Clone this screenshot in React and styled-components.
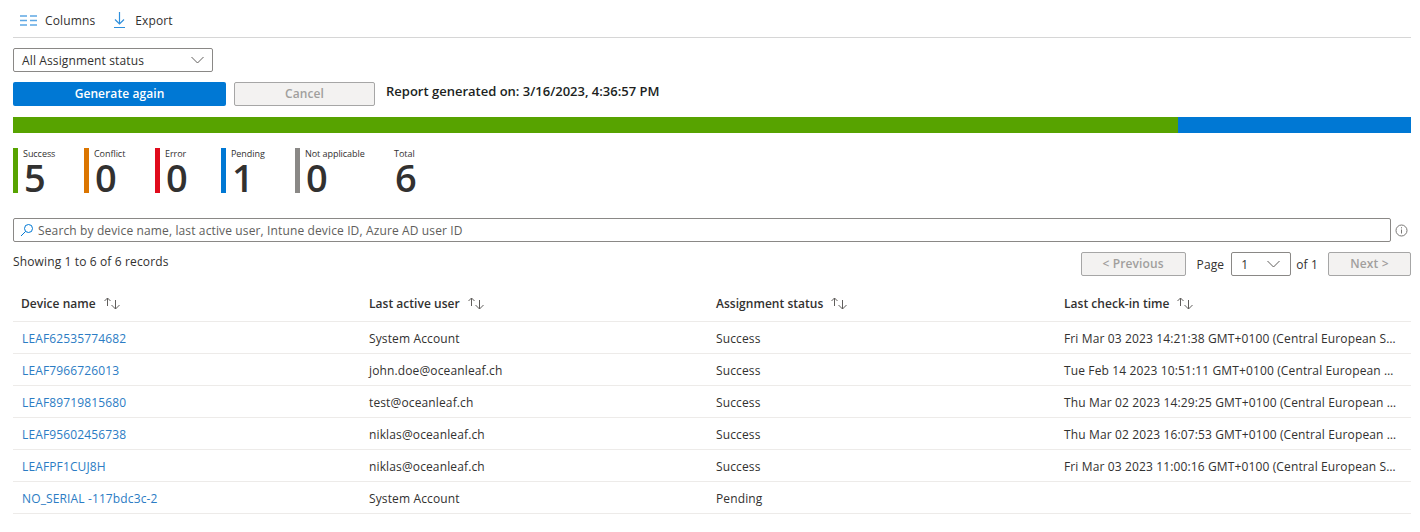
import styled, { createGlobalStyle } from "styled-components";

const GlobalStyle = createGlobalStyle`
    html, body {
        margin: 0;
        background: #fff;
    }
    body {
        font-family: "Open Sans", "Noto Sans", sans-serif;
        font-size: 12px;
        color: #323130;
    }
`;

const stats = [
    { label: "Success", value: 5, color: "#57a300", width: 71 },
    { label: "Conflict", value: 0, color: "#db7500", width: 71 },
    { label: "Error", value: 0, color: "#e00b1c", width: 66 },
    { label: "Pending", value: 1, color: "#0078d4", width: 74 },
    { label: "Not applicable", value: 0, color: "#8a8886", width: 99 },
    { label: "Total", value: 6 },
];

const columns = ["Device name", "Last active user", "Assignment status", "Last check-in time"];

const rows = [
    ["LEAF62535774682", "System Account", "Success", "Fri Mar 03 2023 14:21:38 GMT+0100 (Central European Standard Time)"],
    ["LEAF7966726013", "john.doe@oceanleaf.ch", "Success", "Tue Feb 14 2023 10:51:11 GMT+0100 (Central European Standard Time)"],
    ["LEAF89719815680", "test@oceanleaf.ch", "Success", "Thu Mar 02 2023 14:29:25 GMT+0100 (Central European Standard Time)"],
    ["LEAF95602456738", "niklas@oceanleaf.ch", "Success", "Thu Mar 02 2023 16:07:53 GMT+0100 (Central European Standard Time)"],
    ["LEAFPF1CUJ8H", "niklas@oceanleaf.ch", "Success", "Fri Mar 03 2023 11:00:16 GMT+0100 (Central European Standard Time)"],
    ["NO_SERIAL -117bdc3c-2", "System Account", "Pending", ""],
];

const Chevron = () => (
    <svg width="13" height="8" viewBox="0 0 13 8" fill="none" stroke="#605e5c" strokeWidth="1">
        <path d="M0.500 1l6 6 6-6" />
    </svg>
);

const SortIcon = () => (
    <svg width="18" height="13" viewBox="0 0 18 13" fill="none" stroke="#605e5c" strokeWidth="1">
        <path d="M4.500 9V1M1.500 4l3-3 3 3" />
        <path d="M12.500 3v9M8.500 8l4 4 4-4" />
    </svg>
);

const App = () => {
    return (
        <Page>
            <GlobalStyle />
            <Toolbar>
                <ToolButton>
                    <svg width="17" height="11" viewBox="0 0 17 11" stroke="#5ea8e4" strokeWidth="1.500" fill="none">
                        <path d="M0 1h7M0 5.500h7M0 10h7M10 1h7M10 5.500h7M10 10h7" />
                    </svg>
                    Columns
                </ToolButton>
                <ToolButton>
                    <svg width="15" height="18" viewBox="0 0 15 18" stroke="#2f8fdc" strokeWidth="1.200" fill="none">
                        <path d="M7.500 1v12M3 8.500L7.500 13 12 8.500M2 16.500h11" />
                    </svg>
                    Export
                </ToolButton>
            </Toolbar>

            <StatusSelect>
                All Assignment status
                <Chevron />
            </StatusSelect>

            <ActionRow>
                <PrimaryButton>Generate again</PrimaryButton>
                <CancelButton>Cancel</CancelButton>
                <Generated>Report generated on: 3/16/2023, 4:36:57 PM</Generated>
            </ActionRow>

            <Progress>
                <ProgressPart $grow={5} $color="#57a300" />
                <ProgressPart $grow={1} $color="#0078d4" />
            </Progress>

            <Stats>
                {stats.map((stat) => (
                    <Stat key={stat.label} $color={stat.color} $width={stat.width}>
                        <StatLabel>{stat.label}</StatLabel>
                        <StatValue>{stat.value}</StatValue>
                    </Stat>
                ))}
            </Stats>

            <SearchRow>
                <SearchBox>
                    <svg width="14" height="14" viewBox="0 0 14 14" fill="none" stroke="#0078d4" strokeWidth="1">
                        <circle cx="8.500" cy="5.500" r="4" />
                        <path d="M5.500 8.500L1 13" />
                    </svg>
                    Search by device name, last active user, Intune device ID, Azure AD user ID
                </SearchBox>
                <svg width="13" height="13" viewBox="0 0 13 13" fill="none" stroke="#797775" strokeWidth="1">
                    <circle cx="6.500" cy="6.500" r="5.500" />
                    <path d="M6.500 5.500v4M6.500 3.200v1.200" />
                </svg>
            </SearchRow>

            <PagingRow>
                <Showing>Showing 1 to 6 of 6 records</Showing>
                <Paging>
                    <PageButton $width={105}>&lt; Previous</PageButton>
                    <PageText>Page</PageText>
                    <PageSelect>
                        1
                        <Chevron />
                    </PageSelect>
                    <OfText>of 1</OfText>
                    <PageButton $width={83}>Next &gt;</PageButton>
                </Paging>
            </PagingRow>

            <Table>
                <HeaderRow>
                    {columns.map((title) => (
                        <HeaderCell key={title}>
                            {title}
                            <SortIcon />
                        </HeaderCell>
                    ))}
                </HeaderRow>
                {rows.map((row) => (
                    <Row key={row[0]}>
                        <DeviceLink>{row[0]}</DeviceLink>
                        <Cell>{row[1]}</Cell>
                        <Cell>{row[2]}</Cell>
                        <Cell>{row[3]}</Cell>
                    </Row>
                ))}
            </Table>
        </Page>
    );
};

const Page = styled.div`
    width: 1398px;
    height: 532px;
    padding: 0 9px 0 13px;
    overflow: hidden;
    letter-spacing: 0.13px;
`;

const Toolbar = styled.div`
    display: flex;
    align-items: center;
    gap: 17px;
    height: 34px;
    padding: 3px 0 0 7px;
    border-bottom: 1px solid #d6d6d6;
`;

const ToolButton = styled.div`
    display: flex;
    align-items: center;
    gap: 8px;
    color: #323130;
`;

const selectBase = `
    display: flex;
    align-items: center;
    justify-content: space-between;
    box-sizing: border-box;
    border: 1px solid #8a8886;
    border-radius: 2px;
    background: #fff;
`;

const StatusSelect = styled.div`
    ${selectBase}
    width: 200px;
    height: 24px;
    margin-top: 10px;
    padding: 0 8px 0 8px;
`;

const ActionRow = styled.div`
    display: flex;
    align-items: flex-start;
    margin-top: 10px;
`;

const PrimaryButton = styled.div`
    width: 213px;
    height: 24px;
    line-height: 24px;
    text-align: center;
    background: #0078d4;
    border-radius: 2px;
    color: #fff;
    font-weight: 600;
    letter-spacing: 0.08px;
`;

const disabledButton = `
    box-sizing: border-box;
    height: 24px;
    line-height: 22px;
    text-align: center;
    border: 1px solid #a6a6a6;
    border-radius: 2px;
    background: #f3f2f1;
    color: #a19f9d;
    font-weight: 600;
`;

const CancelButton = styled.div`
    ${disabledButton}
    width: 141px;
    margin-left: 8px;
`;

const Generated = styled.div`
    margin-left: 11px;
    line-height: 18px;
    font-size: 13px;
    letter-spacing: 0;
    font-weight: 600;
    color: #201f1e;
`;

const Progress = styled.div`
    display: flex;
    height: 16px;
    margin-top: 11px;
`;

const ProgressPart = styled.div`
    flex-grow: ${(props) => props.$grow};
    flex-basis: 0;
    background: ${(props) => props.$color};
`;

const Stats = styled.div`
    display: flex;
    height: 45px;
    margin-top: 15px;
`;

const Stat = styled.div`
    box-sizing: border-box;
    width: ${(props) => (props.$width ? `${props.$width}px` : "auto")};
    height: 45px;
    padding-left: ${(props) => (props.$color ? "5px" : "0")};
    border-left: ${(props) => (props.$color ? `5px solid ${props.$color}` : "none")};
`;

const StatLabel = styled.div`
    font-size: 9px;
    line-height: 12px;
    letter-spacing: -0.05px;
    color: #323130;
`;

const StatValue = styled.div`
    font-size: 38px;
    font-weight: 600;
    line-height: 34px;
    letter-spacing: 0;
    margin-left: 1px;
    color: #323130;
`;

const SearchRow = styled.div`
    display: flex;
    align-items: center;
    gap: 4px;
    margin-top: 25px;
    padding-right: 3px;
`;

const SearchBox = styled.div`
    display: flex;
    align-items: center;
    gap: 4px;
    flex: 1;
    box-sizing: border-box;
    height: 24px;
    padding: 0 6px;
    border: 1px solid #8a8886;
    border-radius: 2px;
    color: #605e5c;
    svg {
        flex: none;
    }
`;

const PagingRow = styled.div`
    display: flex;
    justify-content: space-between;
    margin-top: 9px;
`;

const Showing = styled.div`
    line-height: 22px;
`;

const Paging = styled.div`
    display: flex;
    align-items: center;
    height: 24px;
    margin-top: 1px;
`;

const PageButton = styled.div`
    ${disabledButton}
    width: ${(props) => props.$width}px;
`;

const PageText = styled.span`
    margin: 0 7px 0 11px;
`;

const OfText = styled.span`
    margin: 0 10px 0 5px;
`;

const PageSelect = styled.div`
    ${selectBase}
    width: 60px;
    height: 24px;
    padding: 0 10px 0 9px;
`;

const Table = styled.div`
    margin-top: 11px;
`;

const gridRow = `
    display: grid;
    grid-template-columns: 348px 347px 348px 1fr;
    border-bottom: 1px solid #edebe9;
    box-sizing: border-box;
`;

const HeaderRow = styled.div`
    ${gridRow}
    height: 35px;
    padding-bottom: 2px;
    align-items: center;
`;

const HeaderCell = styled.div`
    display: flex;
    align-items: center;
    gap: 7px;
    padding-left: 8px;
    font-weight: 600;
    letter-spacing: 0.03px;
`;

const Row = styled.div`
    ${gridRow}
    height: 32px;
    padding-top: 2px;
    align-items: center;
`;

const Cell = styled.div`
    padding: 0 11px 0 8px;
    white-space: nowrap;
    overflow: hidden;
    text-overflow: ellipsis;
`;

const DeviceLink = styled(Cell)`
    padding-left: 9px;
    color: #2b7cc4;
`;

export default App;
